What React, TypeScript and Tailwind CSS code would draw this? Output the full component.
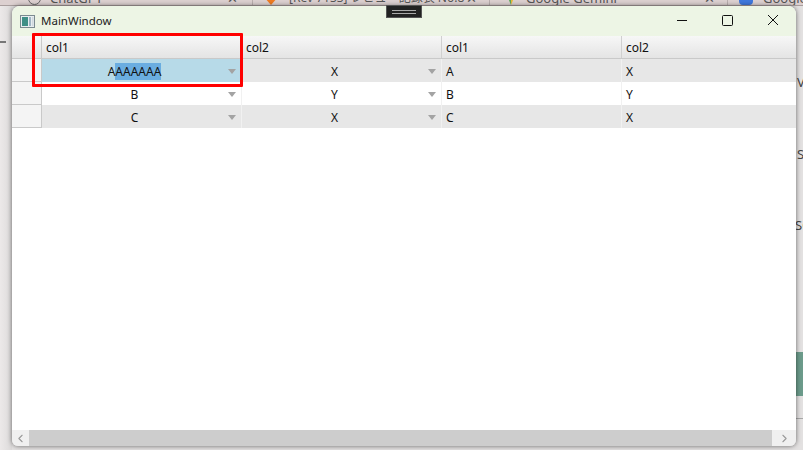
import { ChevronLeft, ChevronRight } from 'lucide-react'

const FONT = "font-['Noto_Sans','Noto_Sans_CJK_JP',sans-serif]"

const rows = [
  { a: 'A', b: 'X', bg: 'bg-[#e7e7e7]' },
  { a: 'B', b: 'Y', bg: 'bg-white' },
  { a: 'C', b: 'X', bg: 'bg-[#e7e7e7]' },
]

const COLS = 'grid grid-cols-[30px_200px_200px_180px_1fr]'

function Caret() {
  return (
    <span className="absolute right-[5px] top-[10px] h-0 w-0 border-x-[4px] border-t-[5px] border-x-transparent border-t-[#a3a3a3]" />
  )
}

function ComboCell({ children, selected }: { children: React.ReactNode; selected?: boolean }) {
  return (
    <div
      className={`relative flex h-full items-center justify-center border-r border-[#f1f1f1] pt-[2px] pr-[14px] ${selected ? 'bg-[#b7dae8]' : ''}`}
    >
      {children}
      <Caret />
    </div>
  )
}

function TabStrip() {
  return (
    <div className="flex h-[6px] shrink-0 overflow-hidden border-b border-[#a99e9e] bg-[#dcd0d0] text-[13px] leading-[14px] text-[#555]">
      <div className="-mt-[9px] flex h-[14px] w-[253px] shrink-0 border-r border-[#b9aeae]">
        <span className="ml-[28px] h-[14px] w-[13px] shrink-0 rounded-full border border-[#666]" />
        <span className="ml-[9px] grow">ChatGPT</span>
        <span className="mr-[14px]">✕</span>
      </div>
      <div className="-mt-[9px] flex h-[14px] w-[237px] shrink-0 border-r border-[#b9aeae]">
        <svg width="14" height="14" viewBox="0 0 14 14" className="ml-[11px] shrink-0">
          <path d="M0 0H14V6L7 14L0 6Z" fill="#ee7b22" />
        </svg>
        <span className="ml-[11px] grow whitespace-nowrap text-[12px]">[Rev 7133] レビュー記録表 No.8</span>
        <span className="mr-[12px]">✕</span>
      </div>
      <div className="-mt-[9px] flex h-[14px] w-[238px] shrink-0 border-r border-[#b9aeae]">
        <svg width="12" height="14" viewBox="0 0 12 14" className="ml-[15px] shrink-0">
          <path d="M0 0H6V14Z" fill="#5aa85a" />
          <path d="M6 0H12L6 14Z" fill="#e8b93a" />
        </svg>
        <span className="ml-[9px] grow whitespace-nowrap">Google Gemini</span>
        <span className="mr-[12px]">✕</span>
      </div>
      <div className="-mt-[9px] flex h-[14px] grow">
        <span className="ml-[11px] h-[14px] w-[14px] shrink-0 rounded-sm bg-[#3f78dd]" />
        <span className="ml-[10px] whitespace-nowrap">Google</span>
      </div>
    </div>
  )
}

function Backdrop() {
  return (
    <div className="flex h-full flex-col">
      <TabStrip />
      <div className="flex grow justify-between bg-[#e3e1e1]">
        <div className="relative w-[12px] bg-gradient-to-r from-[#ece9e9] to-[#dcdada]">
          <span className="absolute left-0 top-[35px] h-[2px] w-[6px] bg-[#777]" />
        </div>
        <div className="relative w-[7px] overflow-hidden text-[13px] leading-[16px] text-[#444]">
          <span className="absolute left-[1px] top-[68px] whitespace-nowrap">V</span>
          <span className="absolute left-[1px] top-[140px] whitespace-nowrap">S</span>
          <span className="absolute -left-[1px] top-[211px] whitespace-nowrap">SC</span>
          <div className="absolute inset-x-0 top-[346px] h-[44px] bg-[#6c9b8b]" />
          <div className="absolute inset-x-0 top-[412px] h-px bg-[#a8a8a8]" />
        </div>
      </div>
    </div>
  )
}

function WindowIcon() {
  return (
    <svg width="15" height="13" viewBox="0 0 15 13" className="ml-[8px]">
      <rect x="0.5" y="0.5" width="14" height="12" fill="#e8eef0" stroke="#7b8a90" />
      <rect x="2" y="2" width="6" height="9" fill="#3f8f86" />
      <rect x="9" y="2" width="2" height="9" fill="#9fb4c4" />
      <rect x="12" y="2" width="1.5" height="9" fill="#cfd8de" />
    </svg>
  )
}

function WindowButtons() {
  return (
    <svg width="101" height="30" viewBox="0 0 101 30" className="mr-[18px] text-[#111]">
      <path d="M0 14.5H10" stroke="currentColor" fill="none" />
      <rect x="45.5" y="9.5" width="10" height="10" rx="1" stroke="currentColor" fill="none" />
      <path d="M91 9L101 19M101 9L91 19" stroke="currentColor" fill="none" />
    </svg>
  )
}

export default function App() {
  return (
    <div className={`relative h-[450px] w-[803px] overflow-hidden ${FONT}`}>
      <Backdrop />

      <div className="absolute left-[12px] top-[6px] flex h-[440px] w-[784px] flex-col overflow-hidden rounded-t-[8px] rounded-b-[6px] bg-white shadow-[0_0_5px_rgba(0,0,0,0.55)]">
        <div className="flex h-[30px] shrink-0 items-center bg-[#edf5e5]">
          <WindowIcon />
          <span className="ml-[6px] grow text-[11.5px] leading-[28px] text-[#222]">MainWindow</span>
          <WindowButtons />
        </div>

        <div className={`${COLS} h-[23px] shrink-0 border-b border-[#c9c9c9] bg-gradient-to-b from-[#f7f7f7] to-[#e4e4e4] text-[12px] leading-[16px] text-[#111]`}>
          <div className="border-r border-[#c9c9c9]" />
          <div className="flex items-center border-r border-[#d0d0d0] pt-[1px] pl-[4px]">col1</div>
          <div className="flex items-center border-r border-[#d0d0d0] pt-[1px] pl-[4px]">col2</div>
          <div className="flex items-center border-r border-[#d0d0d0] pt-[1px] pl-[4px]">col1</div>
          <div className="flex items-center pt-[1px] pl-[4px]">col2</div>
        </div>

        {rows.map((r, i) => (
          <div key={i} className={`${COLS} h-[23px] shrink-0 text-[12px] leading-[16px] text-[#111] ${r.bg}`}>
            <div className="border-r border-b border-[#c9c9c9] bg-[#f4f4f4]" />
            <ComboCell selected={i === 0}>
              {i === 0 ? (
                <span>
                  A<span className="bg-[#6aade0]">AAAAAA</span>
                </span>
              ) : (
                r.a
              )}
            </ComboCell>
            <ComboCell>{r.b}</ComboCell>
            <div className="flex items-center border-r border-[#f1f1f1] pt-[2px] pl-[4px]">{r.a}</div>
            <div className="flex items-center pt-[2px] pl-[4px]">{r.b}</div>
          </div>
        ))}

        <div className="grow" />

        <div className="flex h-[16px] shrink-0 items-stretch bg-[#cdcdcd]">
          <div className="flex w-[17px] items-center justify-center bg-[#f0f0f0]">
            <ChevronLeft size={13} className="text-[#9a9a9a]" />
          </div>
          <div className="grow" />
          <div className="flex w-[24px] items-center justify-center bg-[#f0f0f0]">
            <ChevronRight size={13} className="text-[#9a9a9a]" />
          </div>
        </div>
      </div>

      <div className="absolute left-[386px] top-[5px] flex h-[13px] w-[36px] flex-col items-center justify-center gap-[2px] border border-[#555] bg-[#222]">
        <span className="h-px w-[24px] bg-[#aaa]" />
        <span className="h-px w-[24px] bg-[#aaa]" />
      </div>

      <div className="absolute left-[32px] top-[33px] h-[54px] w-[211px] rounded-[1px] border-[3px] border-[#ff0000]" />
    </div>
  )
}
